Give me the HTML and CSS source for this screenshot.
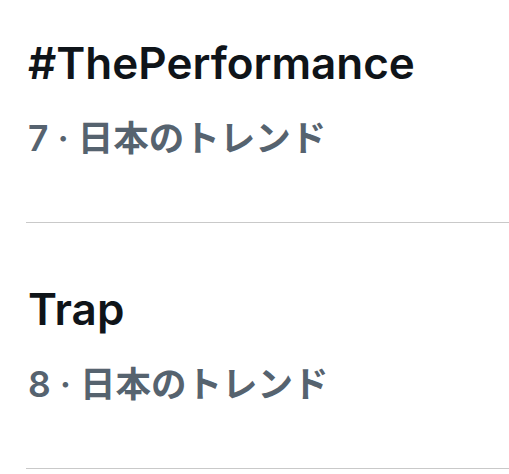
FILE: index.html
```html
<!DOCTYPE html>
<html lang="ja">
<head>
<meta charset="utf-8">
<link rel="stylesheet" href="styles.css">
</head>
<body>
<div class="list">
  <div class="item">
    <div class="title">#ThePerformance</div>
    <div class="meta">7 · 日本のトレンド</div>
  </div>
  <div class="item">
    <div class="title">Trap</div>
    <div class="meta">8 · 日本のトレンド</div>
  </div>
</div>
</body>
</html>
```

FILE: styles.css
```css
html, body {
  margin: 0;
  padding: 0;
  background: #ffffff;
}

body {
  font-family: "Inter", "Noto Sans CJK JP", sans-serif;
  -webkit-font-smoothing: antialiased;
}

.list {
  display: flex;
  flex-direction: column;
}

.item {
  margin-left: 26px;
  padding: 60px 0 59px 2px;
  border-bottom: 1px solid #c9c9c9;
  display: flex;
  flex-direction: column;
  gap: 26px;
}

.item:first-child {
  padding-top: 37px;
}

.title {
  font-size: 44px;
  line-height: 52px;
  font-weight: 600;
  color: #0f1419;
}

.meta {
  font-size: 35.5px;
  line-height: 48px;
  font-weight: 600;
  color: #56636f;
}
```
